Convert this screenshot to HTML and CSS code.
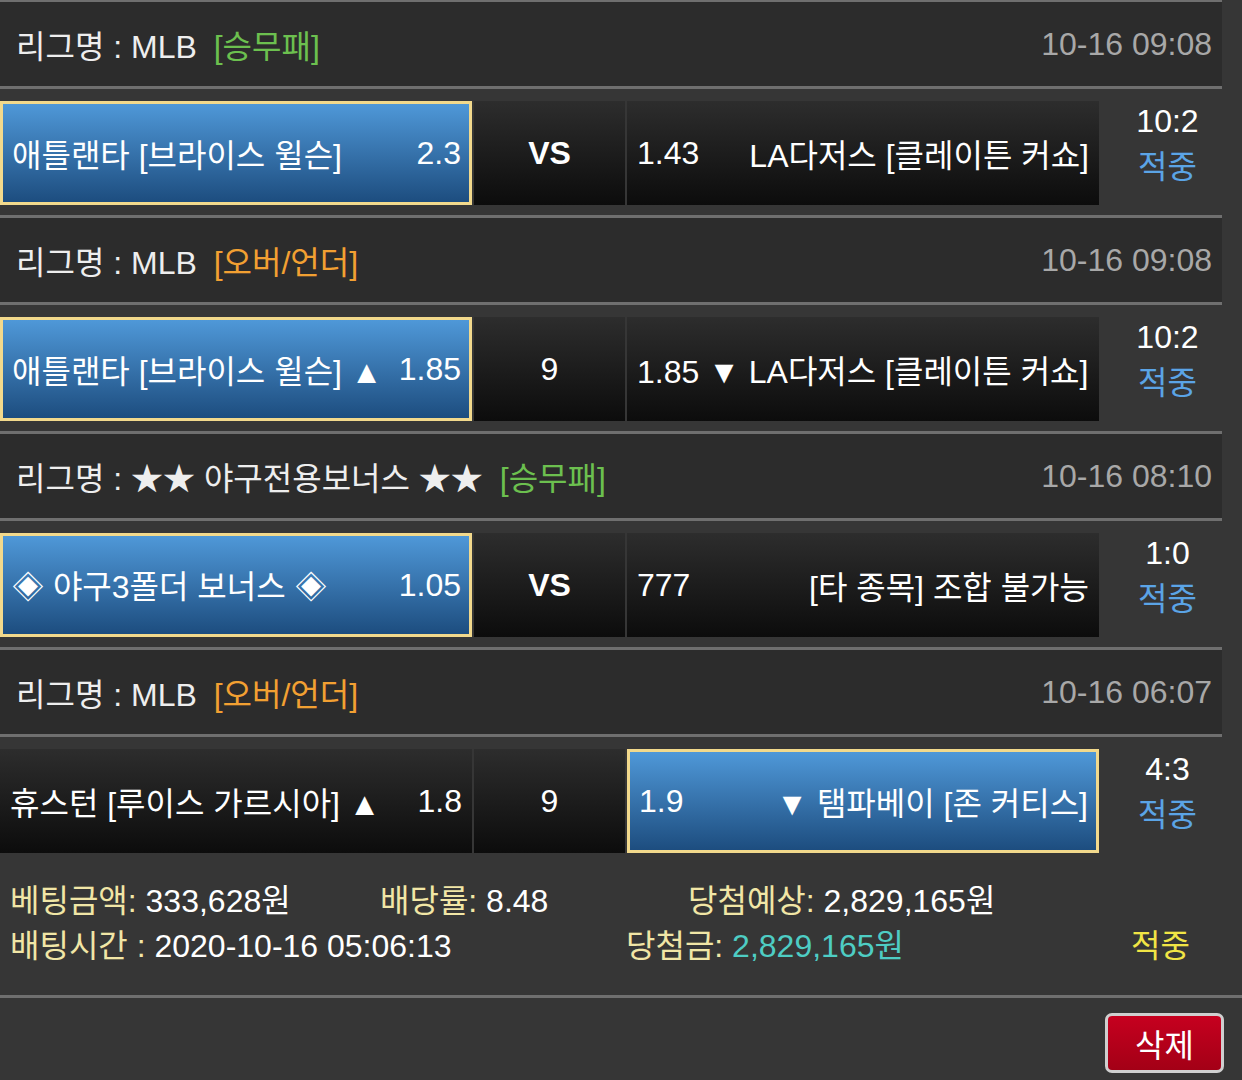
FILE: index.html
```html
<!DOCTYPE html>
<html lang="ko">

<head>
    <meta charset="UTF-8">
    <meta name="viewport" content="width=device-width, initial-scale=1.0">
    <title>베팅내역</title>
    <link rel="stylesheet" href="styles.css">
</head>

<body>
    <div class="games">
        <!-- 경기 1 -->
        <div class="game">
            <div class="league">
                <div class="league-name">리그명 : MLB <span class="tag green">[승무패]</span></div>
                <div class="date">10-16 09:08</div>
            </div>
            <div class="match">
                <div class="pick on">
                    <span>애틀랜타 [브라이스 윌슨]</span>
                    <span>2.3</span>
                </div>
                <div class="mid bold">VS</div>
                <div class="pick">
                    <span>1.43</span>
                    <span>LA다저스 [클레이튼 커쇼]</span>
                </div>
                <div class="result">
                    <div>10:2</div>
                    <div class="hit-blue">적중</div>
                </div>
            </div>
        </div>

        <!-- 경기 2 -->
        <div class="game">
            <div class="league">
                <div class="league-name">리그명 : MLB <span class="tag orange">[오버/언더]</span></div>
                <div class="date">10-16 09:08</div>
            </div>
            <div class="match">
                <div class="pick on">
                    <span>애틀랜타 [브라이스 윌슨] ▲</span>
                    <span>1.85</span>
                </div>
                <div class="mid">9</div>
                <div class="pick">
                    <span>1.85 ▼ LA다저스 [클레이튼 커쇼]</span>
                </div>
                <div class="result">
                    <div>10:2</div>
                    <div class="hit-blue">적중</div>
                </div>
            </div>
        </div>

        <!-- 경기 3 -->
        <div class="game">
            <div class="league">
                <div class="league-name">리그명 : ★★ 야구전용보너스 ★★ <span class="tag green">[승무패]</span></div>
                <div class="date">10-16 08:10</div>
            </div>
            <div class="match">
                <div class="pick on">
                    <span>◈ 야구3폴더 보너스 ◈</span>
                    <span>1.05</span>
                </div>
                <div class="mid bold">VS</div>
                <div class="pick">
                    <span>777</span>
                    <span>[타 종목] 조합 불가능</span>
                </div>
                <div class="result">
                    <div>1:0</div>
                    <div class="hit-blue">적중</div>
                </div>
            </div>
        </div>

        <!-- 경기 4 -->
        <div class="game">
            <div class="league">
                <div class="league-name">리그명 : MLB <span class="tag orange">[오버/언더]</span></div>
                <div class="date">10-16 06:07</div>
            </div>
            <div class="match">
                <div class="pick">
                    <span>휴스턴 [루이스 가르시아] ▲</span>
                    <span>1.8</span>
                </div>
                <div class="mid">9</div>
                <div class="pick on">
                    <span>1.9</span>
                    <span>▼ 탬파베이 [존 커티스]</span>
                </div>
                <div class="result">
                    <div>4:3</div>
                    <div class="hit-blue">적중</div>
                </div>
            </div>
        </div>
    </div>

    <div class="summary">
        <div class="line">
            <div class="col w370"><span class="label">베팅금액:</span> 333,628원</div>
            <div class="col w308"><span class="label">배당률:</span> 8.48</div>
            <div class="col"><span class="label">당첨예상:</span> 2,829,165원</div>
        </div>
        <div class="line">
            <div class="col w616"><span class="label">배팅시간 :</span> 2020-10-16 05:06:13</div>
            <div class="col w505"><span class="label">당첨금:</span> <span class="win-money">2,829,165원</span></div>
            <div class="col hit">적중</div>
        </div>
    </div>

    <div class="actions">
        <button class="delete-btn">삭제</button>
    </div>
</body>

</html>
```

FILE: styles.css
```css
body {
    margin: 0;
    background-color: #363636;
    color: #fff;
    font-family: "Liberation Sans", "Noto Sans CJK KR", sans-serif;
    font-size: 32px;
}

.games {
    width: 1222px;
    border-top: 2px solid #6f6f6f;
}

.league {
    height: 84px;
    background-color: #2c2c2c;
    border-bottom: 3px solid #6f6f6f;
    display: flex;
    justify-content: space-between;
    align-items: center;
    padding: 0 10px 0 16px;
    color: #eee;
}

.tag {
    margin-left: 8px;
}

.green {
    color: #6cc04f;
}

.orange {
    color: #f2a032;
}

.date {
    color: #a8a8a8;
}

.match {
    height: 104px;
    padding: 12px 0 10px;
    border-bottom: 3px solid #6f6f6f;
    display: flex;
    gap: 2px;
}

.game:last-child .match {
    border-bottom: none;
}

.pick {
    width: 472px;
    box-sizing: border-box;
    padding: 0 10px;
    display: flex;
    justify-content: space-between;
    align-items: center;
    white-space: nowrap;
    background: linear-gradient(#2d2d2d, #0c0c0c);
}

.pick.on {
    background: linear-gradient(#4f98d8, #1d4d7f);
    border: 3px solid #f2d98c;
    padding: 0 8px 0 9px;
}

.mid {
    width: 151px;
    display: flex;
    justify-content: center;
    align-items: center;
    background: linear-gradient(#2d2d2d, #0c0c0c);
}

.bold {
    font-weight: bold;
}

.result {
    flex: 1;
    padding-left: 12px;
    margin-top: -3px;
    text-align: center;
    line-height: 46px;
}

.hit-blue {
    color: #5ba4e6;
}

.summary {
    padding: 12px 10px 30px;
    border-bottom: 3px solid #6f6f6f;
}

.line {
    display: flex;
    align-items: center;
    height: 45px;
    white-space: nowrap;
}

.w370 {
    width: 370px;
}

.w308 {
    width: 308px;
}

.w616 {
    width: 616px;
}

.w505 {
    width: 505px;
}

.label {
    color: #f1e6a6;
}

.win-money {
    color: #4ecdc4;
}

.hit {
    color: #f1e545;
}

.actions {
    display: flex;
    justify-content: flex-end;
    padding: 15px 18px 0;
}

.delete-btn {
    width: 119px;
    height: 60px;
    border: 3px solid #cfcfcf;
    border-radius: 7px;
    background: linear-gradient(#c6001f, #a30016);
    color: #fff;
    font-family: "Liberation Sans", "Noto Sans CJK KR", sans-serif;
    font-size: 32px;
    cursor: pointer;
}
```
